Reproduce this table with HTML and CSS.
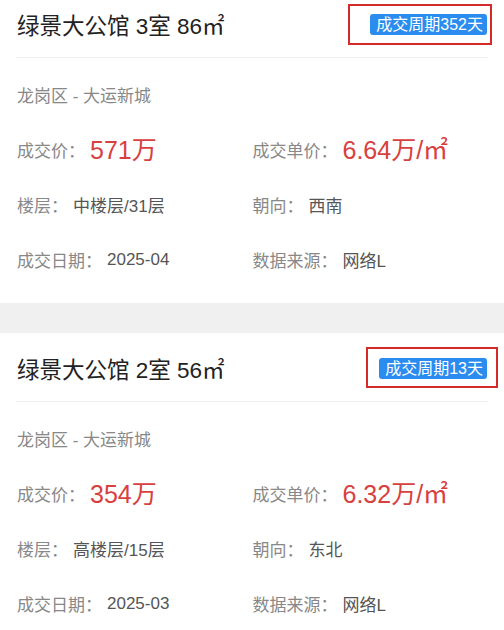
FILE: index.html
```html
<!DOCTYPE html>
<html lang="zh-CN">
<head>
<meta charset="utf-8">
<title>成交记录</title>
<link rel="stylesheet" href="styles.css">
</head>
<body>
<div class="list">
  <div class="card">
    <div class="card-head">
      <div class="title">绿景大公馆 3室 86㎡</div>
      <div class="badge">成交周期352天<span class="mark mark-a"></span></div>
    </div>
    <div class="card-body">
      <div class="row"><span class="loc">龙岗区 - 大运新城</span></div>
      <div class="row grid">
        <div class="cell"><span class="label">成交价：</span><span class="price">571万</span></div>
        <div class="cell"><span class="label">成交单价：</span><span class="price">6.64万/㎡</span></div>
      </div>
      <div class="row grid">
        <div class="cell"><span class="label">楼层：</span><span class="val">中楼层/31层</span></div>
        <div class="cell"><span class="label">朝向：</span><span class="val">西南</span></div>
      </div>
      <div class="row grid">
        <div class="cell"><span class="label">成交日期：</span><span class="val">2025-04</span></div>
        <div class="cell"><span class="label">数据来源：</span><span class="val">网络L</span></div>
      </div>
    </div>
  </div>
  <div class="card">
    <div class="card-head">
      <div class="title">绿景大公馆 2室 56㎡</div>
      <div class="badge">成交周期13天<span class="mark mark-b"></span></div>
    </div>
    <div class="card-body">
      <div class="row"><span class="loc">龙岗区 - 大运新城</span></div>
      <div class="row grid">
        <div class="cell"><span class="label">成交价：</span><span class="price">354万</span></div>
        <div class="cell"><span class="label">成交单价：</span><span class="price">6.32万/㎡</span></div>
      </div>
      <div class="row grid">
        <div class="cell"><span class="label">楼层：</span><span class="val">高楼层/15层</span></div>
        <div class="cell"><span class="label">朝向：</span><span class="val">东北</span></div>
      </div>
      <div class="row grid">
        <div class="cell"><span class="label">成交日期：</span><span class="val">2025-03</span></div>
        <div class="cell"><span class="label">数据来源：</span><span class="val">网络L</span></div>
      </div>
    </div>
  </div>
</div>
</body>
</html>
```
FILE: styles.css
```css
html, body {
  margin: 0;
  padding: 0;
  background: #f0f0f0;
  font-family: "Liberation Sans", "Noto Sans CJK SC", sans-serif;
  overflow: hidden;
}
.list {
  margin-top: -11px;
  display: flex;
  flex-direction: column;
  gap: 30px;
}
.card {
  background: #fff;
  padding: 0 16px;
}
.card-head {
  height: 69px;
  box-sizing: border-box;
  padding-top: 2px;
  border-bottom: 1px solid #eeeeee;
  display: flex;
  align-items: center;
  justify-content: space-between;
}
.title {
  font-size: 22.5px;
  color: #222;
  padding-left: 1px;
}
.badge {
  position: relative;
  background: #2b8cf0;
  color: #fff;
  font-size: 16px;
  line-height: 21px;
  padding: 0 4px 0 6px;
  border-radius: 3px;
  margin-right: 1px;
}
.mark {
  position: absolute;
  border: 2px solid #d42a2a;
}
.mark-a {
  left: -22px;
  right: -5px;
  top: -10px;
  bottom: -10px;
}
.mark-b {
  left: -13px;
  right: -11px;
  top: -11px;
  bottom: -9px;
}
.card-body {
  padding: 9px 0 16px;
}
.row {
  height: 55px;
  display: flex;
  align-items: center;
  font-size: 17px;
  padding-left: 1px;
}
.grid {
  display: grid;
  grid-template-columns: 1fr 1fr;
  align-items: center;
}
.cell {
  display: flex;
  align-items: center;
}
.loc {
  color: #888;
}
.label {
  color: #888;
}
.val {
  color: #555;
  margin-left: 5px;
}
.price {
  color: #d8403f;
  font-size: 25px;
  margin-left: 5px;
  line-height: 30px;
}
```
